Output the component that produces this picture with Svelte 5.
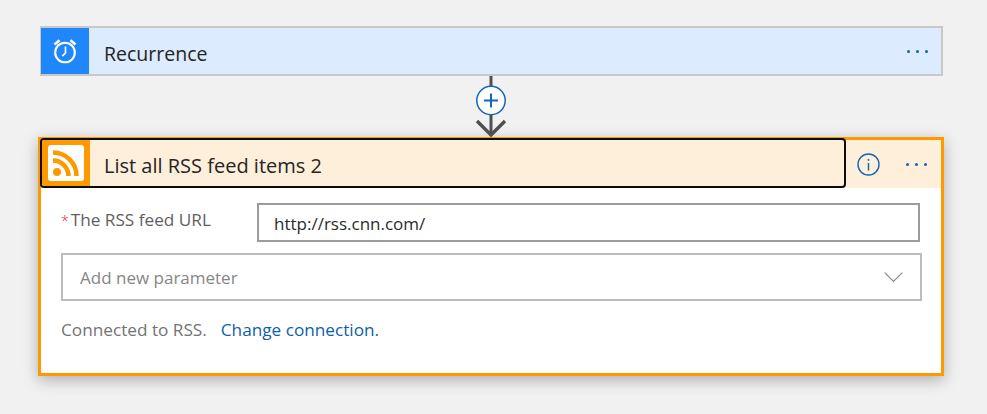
<script>
  const dots = [0, 1, 2];
</script>

<div class="page">
  <div class="trigger">
    <div class="tile blue">
      <svg width="26" height="26" viewBox="0 0 26 26" fill="none" stroke="#fff">
        <circle cx="13" cy="14.5" r="9.8" stroke-width="2.1" />
        <path d="M13.5 8.5v6.5l-3.2 3.2" stroke-width="1.7" />
        <path d="M2.5 6.5 7.5 2.3M23.5 6.5 18.5 2.3" stroke-width="2.5" />
      </svg>
    </div>
    <div class="title">Recurrence</div>
    <div class="more">{#each dots as d}<i class="dot" data-d={d}></i>{/each}</div>
  </div>

  <div class="connector">
    <svg width="34" height="61" viewBox="0 0 34 61" fill="none">
      <path d="M17 0V59" stroke="#505050" stroke-width="3" />
      <path d="M3 45 17 59 31 45" stroke="#505050" stroke-width="3.4" />
      <circle cx="17" cy="24.5" r="14.2" fill="#fff" stroke="#1565b8" stroke-width="1.5" />
      <path d="M10 24.5H24M17 17.5V31.5" stroke="#1565b8" stroke-width="2" />
    </svg>
  </div>

  <div class="card">
    <div class="head">
      <div class="focus">
        <div class="tile orange">
          <svg class="rss" width="36" height="36" viewBox="0 0 36 36">
            <rect width="36" height="36" rx="3" fill="#fff" />
            <circle cx="9" cy="27" r="4" fill="#ff9900" />
            <path d="M5 15.5A15.5 15.5 0 0 1 20.5 31" fill="none" stroke="#ff9900" stroke-width="4.6" />
            <path d="M5 7.5A23.5 23.5 0 0 1 28.5 31" fill="none" stroke="#ff9900" stroke-width="4.6" />
          </svg>
        </div>
        <div class="title">List all RSS feed items 2</div>
      </div>
      <svg class="info" width="23" height="23" viewBox="0 0 23 23" fill="none" stroke="#1565b8">
        <circle cx="11.5" cy="11.5" r="10.5" stroke-width="1.4" />
        <path d="M11.5 10v7.5" stroke-width="1.5" />
        <path d="M11.5 6v1.8" stroke-width="1.6" />
      </svg>
      <div class="more card-more">{#each dots as d}<i class="dot" data-d={d}></i>{/each}</div>
    </div>

    <div class="body">
      <div class="row">
        <div class="label"><span class="req">*</span>The RSS feed URL</div>
        <div class="input">http://rss.cnn.com/</div>
      </div>
      <div class="select">
        <span class="placeholder">Add new parameter</span>
        <svg width="19" height="11" viewBox="0 0 19 11" fill="none" stroke="#8a8a8a" stroke-width="1.2"><path d="M.7.7 9.5 9.5 18.3.7" /></svg>
      </div>
      <div class="conn">
        <span class="muted">Connected to RSS.</span>
        <span class="link">Change connection.</span>
      </div>
    </div>
  </div>
</div>

<style>
  :global(body) {
    margin: 0;
    background: #f1f1f1;
    overflow: hidden;
  }
  .page {
    width: 987px;
    height: 414px;
    box-sizing: border-box;
    padding: 26px 43px 0 38px;
    font-family: "Open Sans", "Noto Sans", sans-serif;
    color: #252525;
    background: #f1f1f1;
  }
  .trigger {
    margin: 0 1px 0 2px;
    height: 50px;
    box-sizing: border-box;
    border: 1px solid #c8c8c8;
    border-width: 2px 2px 2px 1px;
    background: #dcebfe;
    display: flex;
    align-items: stretch;
  }
  .tile {
    width: 48px;
    flex: none;
    display: flex;
    align-items: center;
    justify-content: center;
  }
  .blue { background: #2086fc; }
  .orange { background: #ff9900; border-radius: 3px 0 0 3px; }
  .title {
    flex: 1;
    padding-left: 15px;
    font-size: 19.5px;
    line-height: 51px;
  }
  .more {
    display: flex;
    gap: 6px;
    align-items: center;
    width: 50px;
    box-sizing: border-box;
    padding-left: 16px;
  }
  .dot {
    width: 3px;
    height: 3px;
    border-radius: 50%;
    background: #0f62b6;
  }
  .connector {
    height: 61px;
    display: flex;
    justify-content: center;
  }
  .card {
    width: 906px;
    height: 239px;
    box-sizing: border-box;
    border: 3px solid #ff9900;
    background: #fff;
    box-shadow: 0 4px 14px rgba(0, 0, 0, 0.28);
  }
  .head {
    height: 48px;
    background: #feefda;
    display: flex;
    align-items: center;
  }
  .focus {
    width: 806px;
    height: 50px;
    margin: -2px 0 0 -1px;
    box-sizing: border-box;
    border: 2px solid #0c0c0c;
    border-radius: 4px;
    display: flex;
    align-items: stretch;
    flex: none;
  }
  .focus .title {
    font-size: 20px;
    padding-left: 14px;
    line-height: 52px;
  }
  .info { margin-left: 11px; flex: none; }
  .card-more { margin-left: 11px; padding-left: 15px; }
  .body {
    padding: 15px 21px 0 20px;
  }
  .row {
    display: flex;
    align-items: flex-start;
  }
  .label {
    width: 196px;
    flex: none;
    font-size: 17.2px;
    line-height: 33px;
    color: #5f5f5f;
    white-space: nowrap;
  }
  .req {
    color: #e8112d;
    font-size: 14px;
    font-weight: 300;
    margin-right: 2px;
  }
  .input {
    flex: 1;
    height: 39px;
    box-sizing: border-box;
    border: 2px solid #9b9b9b;
    padding-left: 15px;
    font-size: 17px;
    line-height: 37px;
    color: #2b2b2b;
  }
  .select {
    margin-top: 11px;
    margin-right: -2px;
    height: 48px;
    box-sizing: border-box;
    border: 2px solid #bdbdbd;
    padding: 0 17px 0 17px;
    display: flex;
    align-items: center;
    justify-content: space-between;
    font-size: 17px;
    color: #868686;
  }
  .placeholder { line-height: 46px; padding-top: 1px; }
  .conn {
    margin-top: 17px;
    font-size: 17.2px;
    line-height: 24px;
    display: flex;
    gap: 14px;
  }
  .muted { color: #737373; }
  .link { color: #0f5eaa; }
</style>
